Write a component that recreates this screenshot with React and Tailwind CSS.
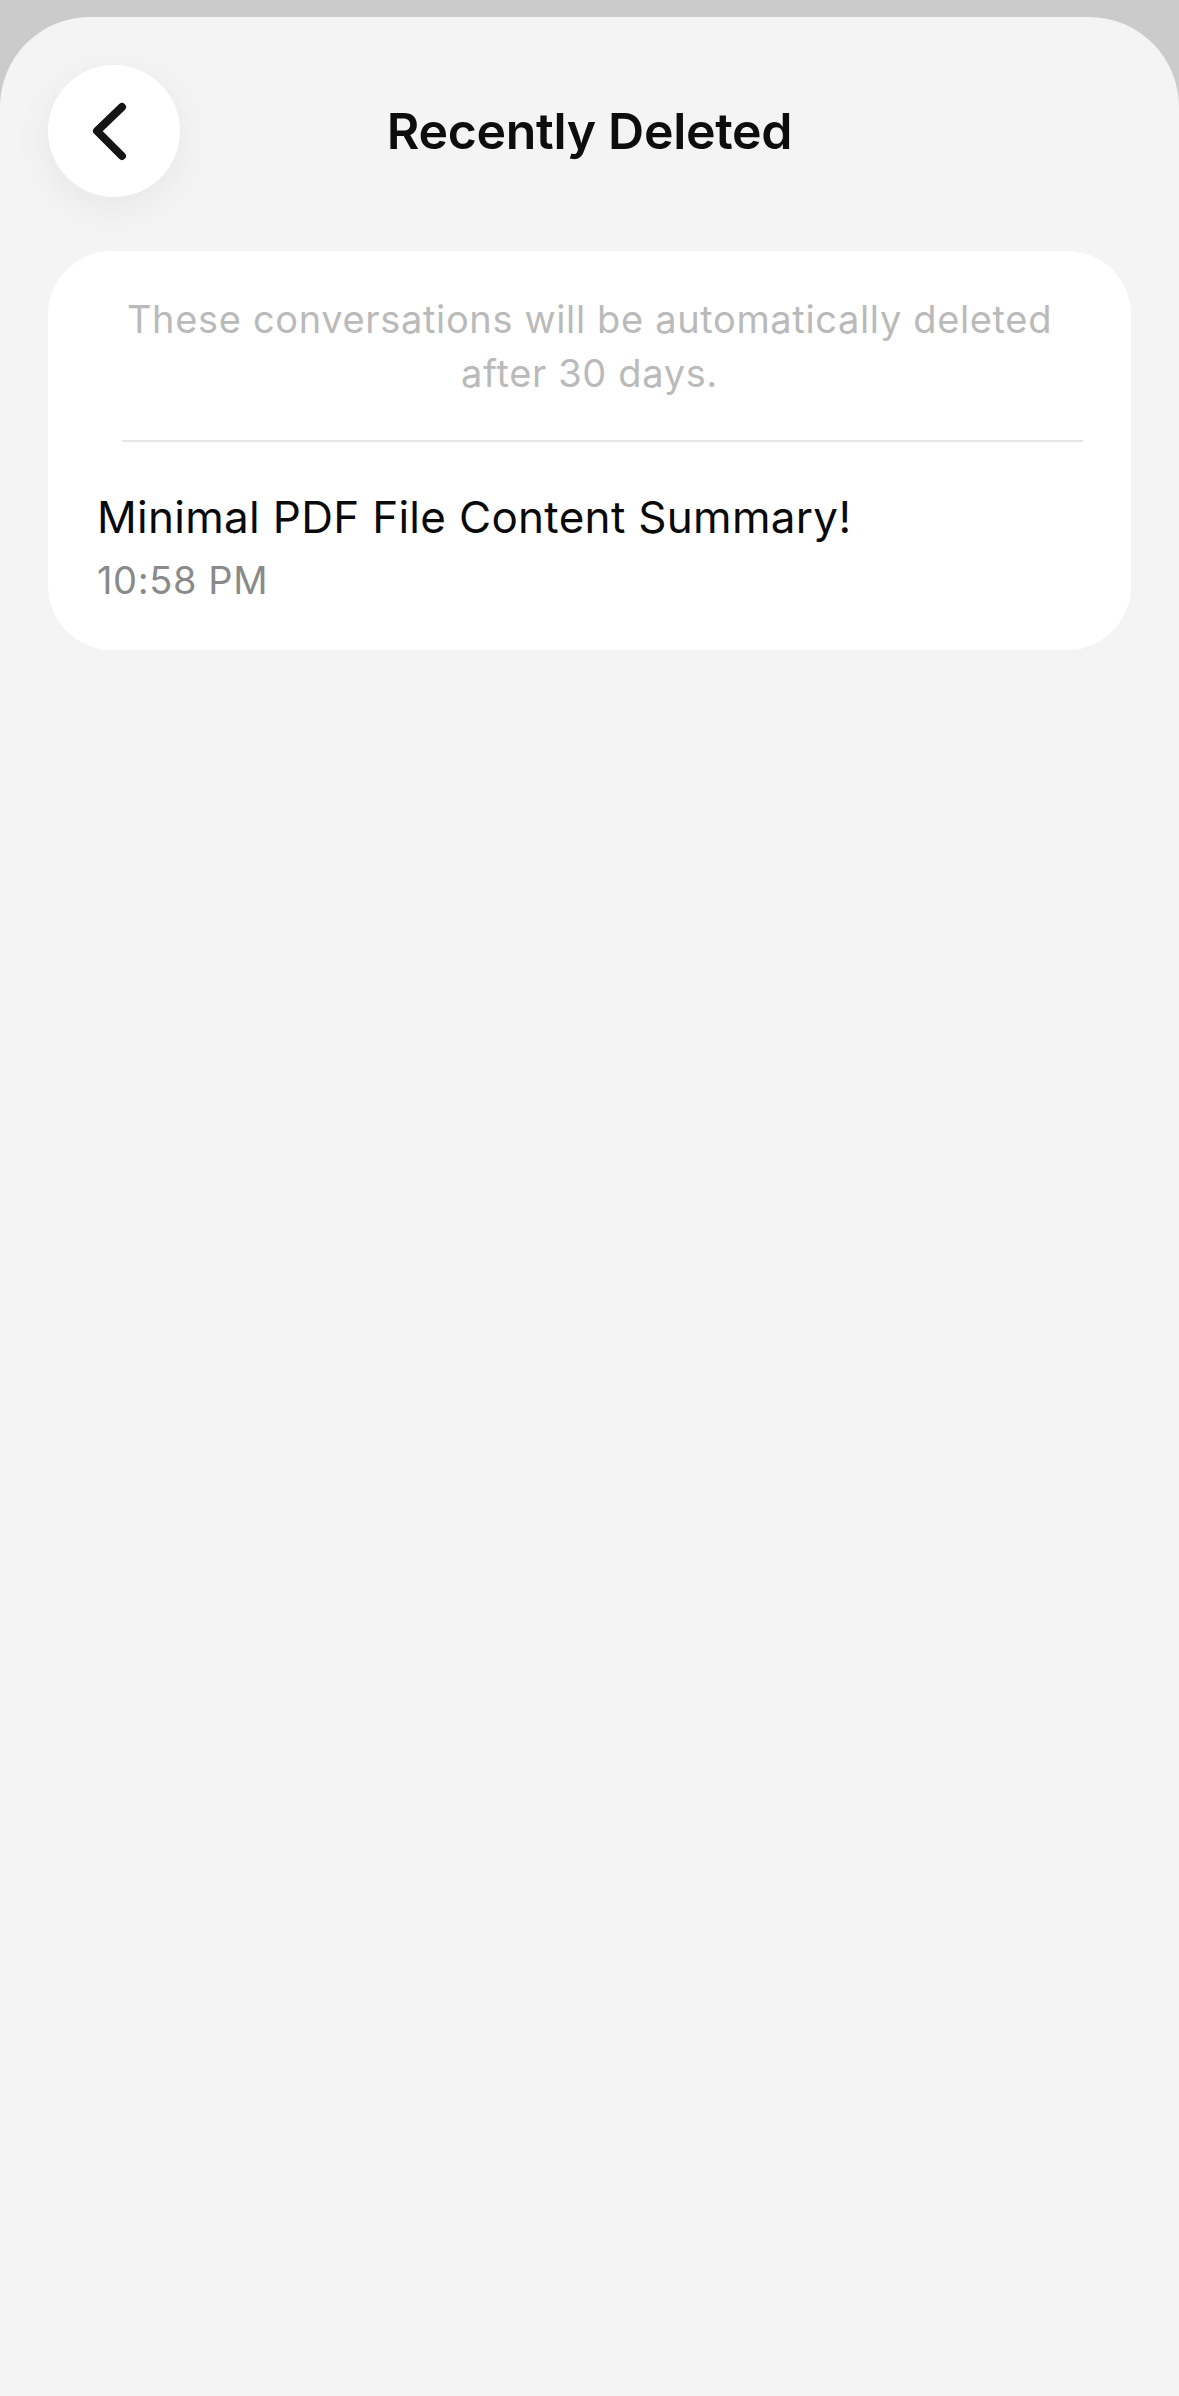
export default function App() {
  return (
    <div
      className="min-h-[2396px] bg-[#cbcbcb] pt-[17px]"
      style={{ fontFamily: 'Inter, "Noto Sans", sans-serif' }}
    >
      <div className="min-h-[2379px] rounded-t-[90px] bg-[#f4f4f4]">
        {/* header */}
        <div className="grid grid-cols-[132px_1fr_132px] items-center px-[48px] pt-[48px]">
          <button className="flex h-[132px] w-[132px] items-center justify-center rounded-full bg-white shadow-[0_10px_40px_rgba(0,0,0,0.06)]">
            <svg width="132" height="132" viewBox="0 0 132 132" fill="none">
              <path
                d="M74 42 L49 66 L74 91"
                stroke="#151515"
                strokeWidth="8"
                strokeLinecap="round"
                strokeLinejoin="round"
              />
            </svg>
          </button>
          <h1 className="text-center text-[50px] font-semibold leading-none tracking-[-0.3px] text-[#0d0d0d]">
            Recently Deleted
          </h1>
          <div />
        </div>

        {/* card */}
        <div className="mx-[48px] mt-[54px] rounded-[64px] bg-white pt-[41px] pb-[47px]">
          <p className="px-[40px] text-center text-[38px] leading-[54px] tracking-[0.65px] text-[#bababa]">
            These conversations will be automatically deleted
            <br />
            after 30 days.
          </p>
          <div className="mt-[40px] mr-[48px] ml-[74px] h-[2px] bg-[#e6e6e6]" />
          <div className="mt-[48px] pl-[49px]">
            <div className="text-[44px] leading-[54px] tracking-[0.3px] text-[#0a0a0a]">
              Minimal PDF File Content Summary!
            </div>
            <div className="mt-[13px] text-[38px] leading-[46px] tracking-[0.6px] text-[#8a8a8a]">
              10:58 PM
            </div>
          </div>
        </div>
      </div>
    </div>
  )
}
